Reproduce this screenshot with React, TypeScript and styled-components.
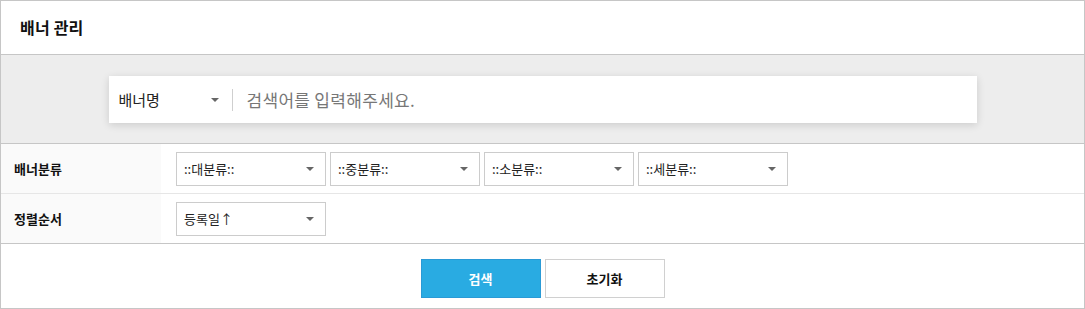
import React from "react";
import styled, { createGlobalStyle } from "styled-components";

const GlobalStyle = createGlobalStyle`
  html, body {
    margin: 0;
    padding: 0;
    background: #fff;
  }
  body {
    font-family: "Noto Sans CJK KR", "Noto Sans", sans-serif;
    color: #222;
  }
  * {
    box-sizing: border-box;
  }
`;

const Panel = styled.div`
  width: 1085px;
  height: 309px;
  border: 1px solid #c6c6c6;
  display: flex;
  flex-direction: column;
  background: #fff;
`;

const Header = styled.div`
  height: 54px;
  border-bottom: 1px solid #c6c6c6;
  display: flex;
  align-items: center;
  padding-left: 19px;
  padding-bottom: 1px;
`;

const Title = styled.h1`
  margin: 0;
  font-size: 16px;
  font-weight: 700;
  color: #111;
  letter-spacing: 0.2px;
`;

const SearchArea = styled.div`
  height: 89px;
  background: #ededed;
  border-bottom: 1px solid #c6c6c6;
  display: flex;
  justify-content: center;
  padding-top: 21px;
`;

const SearchBox = styled.div`
  width: 868px;
  height: 47px;
  background: #fff;
  box-shadow: 0 2px 8px rgba(0, 0, 0, 0.14);
  display: flex;
  align-items: center;
  padding-left: 10px;
`;

const FieldSelect = styled.div`
  width: 113px;
  display: flex;
  align-items: center;
  justify-content: space-between;
  padding-right: 13px;
  font-size: 15px;
  color: #222;
`;

const Divider = styled.span`
  width: 1px;
  height: 22px;
  background: #cfcfcf;
`;

const Placeholder = styled.span`
  margin-left: 14px;
  font-size: 17px;
  color: #777;
  letter-spacing: 0.3px;
`;

const Caret = styled.span`
  width: 0;
  height: 0;
  border-left: 4px solid transparent;
  border-right: 4px solid transparent;
  border-top: 4px solid #666;
`;

const Row = styled.div<{ $last?: boolean }>`
  height: 50px;
  display: flex;
  border-bottom: 1px solid ${({ $last }) => ($last ? "#c6c6c6" : "#e6e6e6")};
`;

const Label = styled.div`
  width: 160px;
  background: #fafafa;
  display: flex;
  align-items: center;
  padding-left: 13px;
  font-size: 13px;
  font-weight: 700;
  color: #111;
`;

const Controls = styled.div`
  display: flex;
  align-items: center;
  gap: 4px;
  padding-left: 15px;
`;

const Select = styled.div`
  width: 150px;
  height: 34px;
  border: 1px solid #ccc;
  background: #fff;
  display: flex;
  align-items: center;
  justify-content: space-between;
  padding: 0 11px 0 7px;
  font-size: 13px;
  color: #222;
`;

const Actions = styled.div`
  flex: 1;
  display: flex;
  justify-content: center;
  gap: 4px;
  padding-top: 15px;
`;

const Button = styled.button<{ $primary?: boolean }>`
  width: 120px;
  height: 39px;
  border: 1px solid ${({ $primary }) => ($primary ? "#2a9ad6" : "#d0d0d0")};
  background: ${({ $primary }) => ($primary ? "#29abe2" : "#fff")};
  color: ${({ $primary }) => ($primary ? "#fff" : "#111")};
  font-family: inherit;
  font-size: 13px;
  font-weight: 700;
  padding: 0;
  cursor: pointer;
`;

const categories = ["::대분류::", "::중분류::", "::소분류::", "::세분류::"];

export default function App() {
  return (
    <>
      <GlobalStyle />
      <Panel>
        <Header>
          <Title>배너 관리</Title>
        </Header>
        <SearchArea>
          <SearchBox>
            <FieldSelect>
              배너명
              <Caret />
            </FieldSelect>
            <Divider />
            <Placeholder>검색어를 입력해주세요.</Placeholder>
          </SearchBox>
        </SearchArea>
        <Row>
          <Label>배너분류</Label>
          <Controls>
            {categories.map((c) => (
              <Select key={c}>
                {c}
                <Caret />
              </Select>
            ))}
          </Controls>
        </Row>
        <Row $last>
          <Label>정렬순서</Label>
          <Controls>
            <Select>
              등록일↑
              <Caret />
            </Select>
          </Controls>
        </Row>
        <Actions>
          <Button $primary>검색</Button>
          <Button>초기화</Button>
        </Actions>
      </Panel>
    </>
  );
}
